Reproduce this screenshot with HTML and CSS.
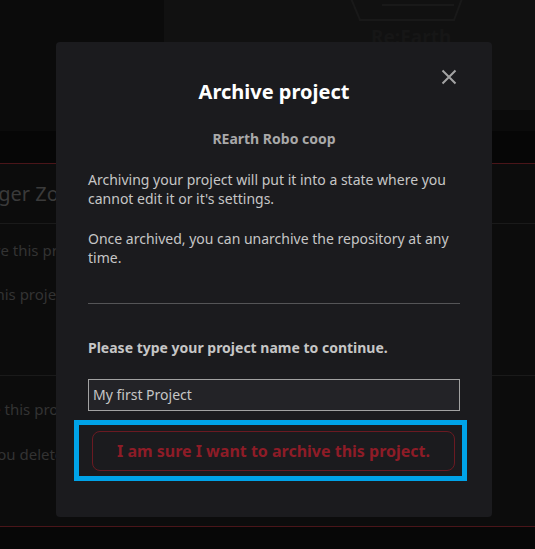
FILE: index.html
```html
<!DOCTYPE html>
<html lang="en">
<head>
<meta charset="utf-8">
<title>Archive project</title>
<link rel="stylesheet" href="styles.css">
</head>
<body>
<div class="page">
  <header class="top">
    <div class="top-left"></div>
    <div class="top-right">
      <svg class="logo-shape" width="120" height="22" viewBox="0 0 120 22">
        <path d="M1 -4 L11 20 L105 20 L114 -4" fill="none" stroke="#191919" stroke-width="2"/>
        <path d="M33 5 L105 5" fill="none" stroke="#191919" stroke-width="2"/>
      </svg>
      <div class="logo-text">Re:Earth</div>
    </div>
  </header>
  <div class="band-a"></div>
  <div class="band-b"></div>
  <section class="danger">
    <div class="danger-head"><span class="t-head">Danger Zone</span></div>
    <div class="danger-block first">
      <div class="t-row t-archive">Archive this project</div>
      <div class="t-row t-desc">this project will be read-only</div>
    </div>
    <div class="danger-block second">
      <div class="t-row t-delete"><span class="red">Delete</span> this project</div>
      <div class="t-row t-once">Once you delete this project, there is no going back.</div>
    </div>
  </section>
  <div class="bottom"></div>
</div>

<div class="overlay">
  <div class="modal">
    <button class="close" aria-label="Close">
      <svg width="16" height="16" viewBox="0 0 16 16"><path d="M1.5 1.5 L14.5 14.5 M14.5 1.5 L1.5 14.5" stroke="#a3a3a3" stroke-width="2" fill="none"/></svg>
    </button>
    <h2 class="title">Archive project</h2>
    <div class="subtitle">REarth Robo coop</div>
    <p class="text first-p">Archiving your project will put it into a state where you cannot edit it or it's settings.</p>
    <p class="text">Once archived, you can unarchive the repository at any time.</p>
    <hr class="divider">
    <div class="label">Please type your project name to continue.</div>
    <input class="name-input" type="text" value="My first Project">
    <button class="confirm">I am sure I want to archive this project.</button>
    <div class="highlight"></div>
  </div>
</div>
</body>
</html>
```

FILE: styles.css
```css
* { box-sizing: border-box; }
html, body {
  margin: 0;
  padding: 0;
  background: #0c0c0c;
  font-family: "Noto Sans", "Open Sans", sans-serif;
}
body {
  width: 535px;
  height: 549px;
  overflow: hidden;
  position: relative;
}
.page {
  width: 535px;
  height: 549px;
  display: flex;
  flex-direction: column;
}
.top {
  display: flex;
  height: 110px;
}
.top-left {
  width: 164px;
  background: #0b0b0b;
}
.top-right {
  flex: 1;
  background: #111111;
  padding-left: 185px;
  display: flex;
  flex-direction: column;
}
.logo-shape { display: block; }
.logo-text {
  margin: 4px 0 0 22px;
  font-size: 19px;
  font-weight: 700;
  line-height: 22px;
  color: #161616;
}
.band-a { height: 21px; background: #0b0b0b; }
.band-b { height: 32px; background: #060606; }
.danger {
  border-top: 1px solid #4a1519;
  border-bottom: 1px solid #4a1519;
  background: #0c0c0c;
  height: 364px;
  display: flex;
  flex-direction: column;
  white-space: nowrap;
  overflow: hidden;
}
.danger-head {
  height: 60px;
  display: flex;
  align-items: center;
  border-bottom: 1px solid #1a1a1a;
}
.t-head {
  font-size: 20px;
  color: #3a3a3a;
  margin-left: -40px;
  line-height: 28px;
}
.danger-block { display: flex; flex-direction: column; }
.danger-block.first {
  height: 152px;
  padding-top: 14px;
  gap: 20px;
  border-bottom: 1px solid #1a1a1a;
}
.danger-block.second {
  padding-top: 21px;
  gap: 21px;
}
.t-row {
  font-size: 15px;
  line-height: 24px;
  color: #333333;
}
.t-archive { margin-left: -43px; }
.t-desc { margin-left: -10px; }
.t-delete { margin-left: -45px; }
.t-delete .red { color: #5a1a1f; }
.t-once { margin-left: -51px; }
.bottom { flex: 1; background: #070707; }

.overlay {
  position: absolute;
  left: 0;
  top: 0;
  width: 535px;
  height: 549px;
  padding: 42px 0 0 56px;
}
.modal {
  position: relative;
  width: 436px;
  background: #1b1b1e;
  border-radius: 4px;
  padding: 36px 32px 46px;
  display: flex;
  flex-direction: column;
}
.close {
  position: absolute;
  left: 384px;
  top: 26px;
  width: 18px;
  height: 18px;
  padding: 1px;
  border: 0;
  background: transparent;
  display: flex;
}
.title {
  margin: 0;
  font-size: 20px;
  line-height: 28px;
  font-weight: 700;
  color: #ffffff;
  text-align: center;
}
.subtitle {
  margin-top: 23px;
  font-size: 14px;
  line-height: 20px;
  font-weight: 700;
  color: #a9a9a9;
  text-align: center;
}
.text {
  margin: 22px 0 0;
  font-size: 14px;
  line-height: 18.5px;
  color: #c6c6c6;
}
.divider {
  margin: 36px 0 0;
  border: 0;
  height: 1px;
  background: #555557;
}
.label {
  margin-top: 35px;
  font-size: 14px;
  line-height: 18.5px;
  font-weight: 700;
  color: #c6c6c6;
}
.name-input {
  margin-top: 21px;
  height: 32px;
  width: 100%;
  background: #232327;
  border: 1px solid #a2a2a2;
  padding: 0 4px;
  font-family: "Noto Sans", "Open Sans", sans-serif;
  font-size: 14px;
  color: #c6c6c6;
  outline: none;
}
.confirm {
  margin: 20px 5px 0 4px;
  height: 40px;
  background: transparent;
  border: 1px solid #6b1a22;
  border-radius: 8px;
  font-family: "Noto Sans", "Open Sans", sans-serif;
  font-size: 16px;
  font-weight: 700;
  color: #8e1c27;
}
.highlight {
  position: absolute;
  left: 18px;
  top: 378px;
  width: 393px;
  height: 61px;
  border: 5px solid #00a3e8;
}
```
